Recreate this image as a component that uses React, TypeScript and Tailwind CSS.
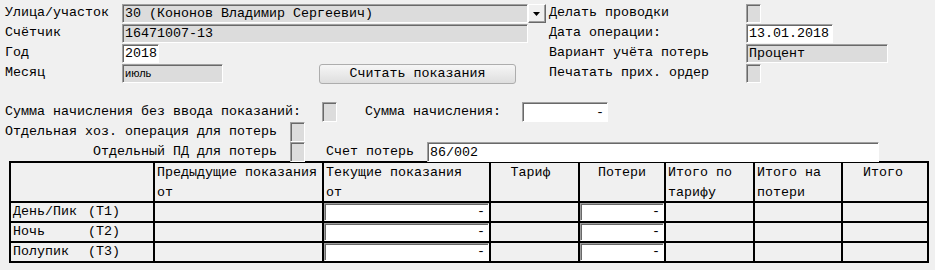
import React from "react";

const sunken =
  "border border-t-[#a0a0a0] border-l-[#a0a0a0] border-b-white border-r-white shadow-[inset_1px_1px_0_#696969]";

function Field({
  w,
  gray,
  children,
  right,
  className = "",
}: {
  w: string;
  gray?: boolean;
  children?: React.ReactNode;
  right?: boolean;
  className?: string;
}) {
  return (
    <div
      className={`${w} h-[19px] ${sunken} ${gray ? "bg-[#dcdcdc]" : "bg-white"} flex items-center ${
        right ? "justify-end pr-[3px]" : "pl-[2px]"
      } leading-[17px] whitespace-pre overflow-hidden ${className}`}
    >
      {children}
    </div>
  );
}

function Check({ h = "h-[19px]" }: { h?: string }) {
  return <div className={`w-[15px] ${h} ${sunken} bg-[#dcdcdc]`} />;
}

function Label({ w, children, className = "" }: { w: string; children: React.ReactNode; className?: string }) {
  return <div className={`${w} h-[20px] leading-[20px] whitespace-pre shrink-0 ${className}`}>{children}</div>;
}

function InputCell() {
  return (
    <div className={`h-full w-full ${sunken} bg-white flex items-center justify-end pr-[3px] leading-none`}>-</div>
  );
}

export default function App() {
  const mono = "font-['Liberation_Mono','Courier_New',monospace]";
  const rows = [
    ["День/Пик", "(T1)"],
    ["Ночь", "(T2)"],
    ["Полупик", "(T3)"],
  ];
  return (
    <div className={`w-[935px] h-[270px] bg-[#f0f0f0] text-black text-[13.333px] ${mono} overflow-hidden`}>
      {/* top block */}
      <div className="pt-[3px] pl-[5px]">
        <div className="flex h-[20px] items-end">
          <Label w="w-[117px]">Улица/участок</Label>
          <Field w="w-[406px]" gray>
            30 (Кононов Владимир Сергеевич)
          </Field>
          <div className="w-[18px] h-[19px] border border-t-white border-l-white border-b-[#696969] border-r-[#696969] shadow-[inset_-1px_-1px_0_#a0a0a0] bg-[#f0f0f0] flex items-center justify-center">
            <svg width="8" height="4" viewBox="0 0 8 4">
              <path d="M0 0H7L3.5 4Z" fill="#000" />
            </svg>
          </div>
          <Label w="w-[197px]" className="ml-[3px]">
            Делать проводки
          </Label>
          <Check />
        </div>
        <div className="flex h-[20px] items-end">
          <Label w="w-[117px]">Счётчик</Label>
          <Field w="w-[406px]" gray>
            16471007-13
          </Field>
          <div className="w-[21px] shrink-0" />
          <Label w="w-[197px]">Дата операции:</Label>
          <Field w="w-[87px]">13.01.2018</Field>
        </div>
        <div className="flex h-[20px] items-end">
          <Label w="w-[117px]">Год</Label>
          <Field w="w-[37px]">2018</Field>
          <div className="w-[390px] shrink-0" />
          <Label w="w-[197px]">Вариант учёта потерь</Label>
          <Field w="w-[142px]" gray>
            Процент
          </Field>
        </div>
        <div className="flex h-[20px] items-end">
          <Label w="w-[117px]">Месяц</Label>
          <Field w="w-[101px]" gray className="font-['Liberation_Sans',Arial,sans-serif] text-[11px]">
            июль
          </Field>
          <div className="w-[96px] shrink-0" />
          <div className="w-[197px] h-[20px] mt-[1px] self-start flex items-center justify-center rounded-[3px] border border-[#adadad] bg-gradient-to-b from-[#f6f6f6] to-[#dedede] leading-none">
            Считать показания
          </div>
          <div className="w-[33px] shrink-0" />
          <Label w="w-[197px]">Печатать прих. ордер</Label>
          <Check />
        </div>
      </div>

      {/* middle block */}
      <div className="mt-[19px] pl-[5px]">
        <div className="flex h-[20px] items-center">
          <Label w="w-[317px]">Сумма начисления без ввода показаний:</Label>
          <Check h="h-[20px]" />
          <div className="w-[28px] shrink-0" />
          <Label w="w-[157px]">Сумма начисления:</Label>
          <Field w="w-[86px]" right className="!h-[20px]">
            -
          </Field>
        </div>
        <div className="flex h-[20px] items-center">
          <Label w="w-[285px]">Отдельная хоз. операция для потерь</Label>
          <Check h="h-[20px]" />
        </div>
        <div className="flex h-[20px] items-center relative z-10">
          <Label w="w-[285px]" className="pl-[88px]">
            Отдельный ПД для потерь
          </Label>
          <Check h="h-[20px]" />
          <Label w="w-[101px]" className="ml-[21px]">
            Счет потерь
          </Label>
          <Field w="w-[452px]" className="!h-[20px]">
            86/002
          </Field>
        </div>
      </div>

      {/* table */}
      <div className="ml-[9px] w-[920px] -mt-[1px]">
        <div className="grid grid-cols-[142px_167px_165px_87px_84px_87px_86px_84px] grid-rows-[38px_18px_18px_18px] gap-[2px] p-[2px] bg-black leading-[20px]">
          <div className="bg-[#f0f0f0]" />
          <div className="bg-[#f0f0f0] pl-[2px] whitespace-pre">
            Предыдущие показания{"\n"}от
          </div>
          <div className="bg-[#f0f0f0] pl-[2px] whitespace-pre">
            Текущие показания{"\n"}от
          </div>
          <div className="bg-[#f0f0f0] text-center pr-[8px]">Тариф</div>
          <div className="bg-[#f0f0f0] text-center">Потери</div>
          <div className="bg-[#f0f0f0] pl-[2px] whitespace-pre">
            Итого по{"\n"}тарифу
          </div>
          <div className="bg-[#f0f0f0] pl-[2px] whitespace-pre">
            Итого на{"\n"}потери
          </div>
          <div className="bg-[#f0f0f0] text-center pr-[4px]">Итого</div>
          {rows.map(([a, b]) => (
            <React.Fragment key={b}>
              <div className="bg-[#f0f0f0] pl-[2px] flex items-center leading-[18px] whitespace-pre">
                <span className="w-[75px] shrink-0">{a}</span>
                <span>{b}</span>
              </div>
              <div className="bg-[#f0f0f0]" />
              <div className="bg-[#f0f0f0]">
                <InputCell />
              </div>
              <div className="bg-[#f0f0f0]" />
              <div className="bg-[#f0f0f0]">
                <InputCell />
              </div>
              <div className="bg-[#f0f0f0]" />
              <div className="bg-[#f0f0f0]" />
              <div className="bg-[#f0f0f0]" />
            </React.Fragment>
          ))}
        </div>
      </div>
    </div>
  );
}
